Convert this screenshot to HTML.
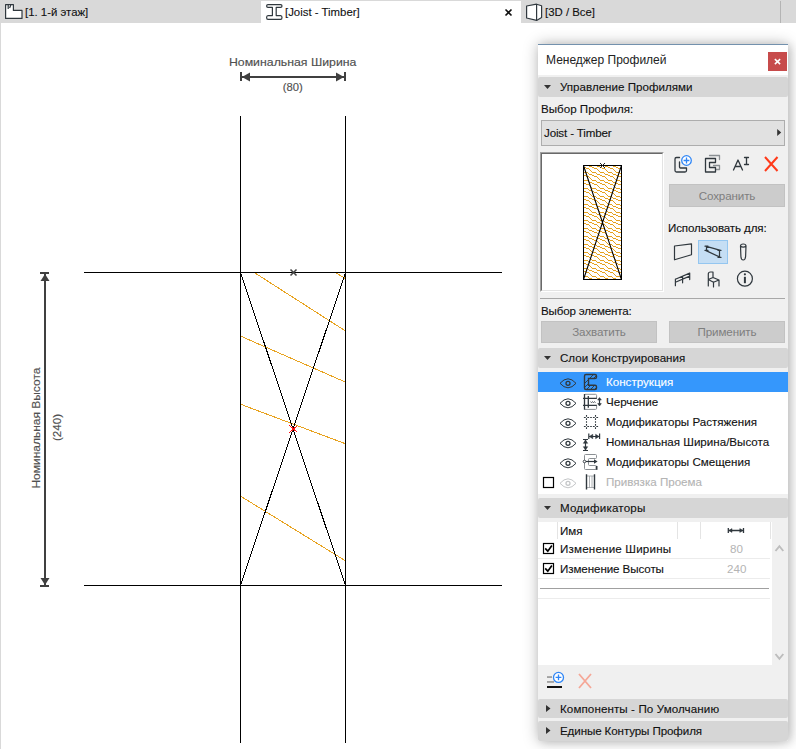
<!DOCTYPE html>
<html><head><meta charset="utf-8">
<style>
*{margin:0;padding:0;box-sizing:border-box}
html,body{width:796px;height:749px;overflow:hidden;background:#fff;font-family:"Liberation Sans",sans-serif;position:relative}
.a{position:absolute}
.t{position:absolute;white-space:nowrap;font-size:11.6px;color:#111;line-height:14px;-webkit-text-stroke:0.12px currentColor}
.hdr{position:absolute;left:538px;width:250px;height:20px;background:#d6d6d6;border-radius:2px}
.btn{position:absolute;background:#cccccc;border:1px solid #c2c2c2;color:#7e7e7e;font-size:11.6px;text-align:center;line-height:20px;letter-spacing:-0.12px}
svg{position:absolute;left:0;top:0}
</style></head><body>
<!-- drawing -->
<svg width="796" height="749" viewBox="0 0 796 749">
<g stroke="#000" stroke-width="1" fill="none" shape-rendering="crispEdges">
<line x1="240.5" y1="116" x2="240.5" y2="743"/>
<line x1="345.5" y1="116" x2="345.5" y2="743"/>
<line x1="84" y1="272.5" x2="502" y2="272.5"/>
<line x1="84" y1="585.5" x2="502" y2="585.5"/>
</g>
<g stroke="#e8a31f" stroke-width="1" fill="none" shape-rendering="crispEdges">
<line x1="255" y1="273" x2="345" y2="330.7"/>
<line x1="336" y1="273" x2="345" y2="278.3"/>
<line x1="241" y1="336.3" x2="345" y2="381.9"/>
<line x1="241" y1="404.4" x2="345" y2="443.6"/>
<line x1="241" y1="496.4" x2="345" y2="560.5"/>
</g>
<g stroke="#000" stroke-width="1" fill="none" shape-rendering="crispEdges">
<line x1="240.5" y1="272.5" x2="345.5" y2="585.5"/>
<line x1="345.5" y1="272.5" x2="240.5" y2="585.5"/>
</g>
<g stroke="#444" stroke-width="1.6"><line x1="290.5" y1="269.5" x2="296.5" y2="275.5"/><line x1="296.5" y1="269.5" x2="290.5" y2="275.5"/></g>

<g stroke="#ff1010" stroke-width="1" shape-rendering="crispEdges"><line x1="289.5" y1="425.5" x2="297.5" y2="432.5"/><line x1="297.5" y1="425.5" x2="289.5" y2="432.5"/></g>
<g fill="#404040" stroke="none">
<rect x="240" y="72" width="2" height="9"/><rect x="344" y="72" width="2" height="9"/>
<rect x="242" y="76" width="102" height="2"/>
<polygon points="242,77 250,72.5 250,81.5"/><polygon points="344,77 336,72.5 336,81.5"/>
<rect x="40" y="272" width="9" height="2"/><rect x="40" y="585" width="9" height="2"/>
<rect x="44" y="274" width="2" height="311"/>
<polygon points="45,274 40.5,281 49.5,281"/><polygon points="45,585 40.5,578 49.5,578"/>
</g>
<g font-family="Liberation Sans" font-size="11" fill="#505050" stroke="#505050" stroke-width="0.15" text-anchor="middle">
<text x="292.7" y="66.4" textLength="127.5" lengthAdjust="spacingAndGlyphs">Номинальная Ширина</text>
<text x="292.7" y="91" textLength="20" lengthAdjust="spacingAndGlyphs">(80)</text>
<text transform="translate(39.6,428.1) rotate(-90)" textLength="121" lengthAdjust="spacingAndGlyphs">Номинальная Высота</text>
<text transform="translate(61,427.5) rotate(-90)" textLength="27" lengthAdjust="spacingAndGlyphs">(240)</text>
</g>
</svg>

<!-- tab bar -->
<div class="a" style="left:0;top:0;width:1px;height:749px;background:#d9d9d9"></div>
<div class="a" style="left:0;top:0;width:796px;height:23px;background:#d9d9d9"></div>
<div class="a" style="left:261px;top:1px;width:260px;height:22px;background:#fff"></div>
<div class="a" style="left:780px;top:1px;width:1px;height:22px;background:#b4b4b4"></div>
<div class="t m" style="left:25px;top:5px;font-size:11.4px;-webkit-text-stroke:0.1px">[1. 1-й этаж]</div>
<div class="t m" style="left:285px;top:5px;font-size:11.4px;-webkit-text-stroke:0.1px">[Joist - Timber]</div>
<div class="t m" style="left:545px;top:5px;font-size:11.4px;-webkit-text-stroke:0.1px">[3D / Все]</div>
<svg width="796" height="30" viewBox="0 0 796 30">
<g fill="#fff" stroke="#30383e" stroke-width="1.2" stroke-linejoin="round">
<path d="M5.6,4.6 H13.4 V10.4 H22 V18.4 H5.6 Z"/>
<path d="M268,4.6 H280.6 Q282,4.6 282,6 Q282,7.4 280.6,7.4 H276.2 V15.6 H280.6 Q282,15.6 282,17.5 Q282,19.4 280.6,19.4 H268 Q266.6,19.4 266.6,17.5 Q266.6,15.6 268,15.6 H272.4 V7.4 H268 Q266.6,7.4 266.6,6 Q266.6,4.6 268,4.6 Z"/>
<path d="M526.6,6 L536.6,4.2 L541.6,5.8 V17.6 L536.6,20.4 L526.6,18 Z"/>
</g>
<path d="M8.2,5 V9 M10.8,5 L9.6,8" stroke="#30383e" stroke-width="1.2"/>
<path d="M536.6,4.2 V20.4" stroke="#30383e" stroke-width="1.2"/>
<path d="M505.5,9.5 L511.5,15.5 M511.5,9.5 L505.5,15.5" stroke="#111" stroke-width="1.6"/>
</svg>

<!-- panel -->
<div class="a" style="left:538px;top:44px;width:250px;height:697px;background:#f0f0f0;box-shadow:0 0 14px rgba(0,0,0,0.28),3px 1px 8px rgba(0,0,0,0.1)"></div>
<div class="a" style="left:538px;top:44px;width:250px;height:1px;background:#7391ad"></div>
<div class="a" style="left:538px;top:45px;width:250px;height:30px;background:#fff"></div>
<div class="t m" style="left:546px;top:53px;font-size:12px;color:#222;-webkit-text-stroke:0">Менеджер Профилей</div>
<div class="a" style="left:768px;top:52px;width:19px;height:19px;background:#c74b4b"></div>

<div class="hdr" style="top:77px"></div>
<div class="t m" style="left:560px;top:80px">Управление Профилями</div>
<div class="t m" style="left:541px;top:102px">Выбор Профиля:</div>
<div class="a" style="left:541px;top:120px;width:244px;height:26px;background:#e1e1e1;border:1px solid #adadad"></div>
<div class="t m" style="left:544px;top:126px;letter-spacing:-0.15px">Joist - Timber</div>
<div class="a" style="left:540px;top:152px;width:124px;height:140px;background:#fff;border:1px solid #a0a0a0;border-right-color:#fff;border-bottom-color:#fff"><div style="width:122px;height:138px;border:1px solid #696969;border-right-color:#e3e3e3;border-bottom-color:#e3e3e3"></div></div>
<div class="btn m" style="left:669px;top:184px;width:116px;height:23px;line-height:22px">Сохранить</div>
<div class="t m" style="left:668px;top:221px;letter-spacing:-0.14px">Использовать для:</div>
<div class="a" style="left:698px;top:240px;width:30px;height:24px;background:#c5def4;border:1px solid #94c6f0"></div>
<div class="a" style="left:540px;top:298px;width:245px;height:1px;background:#a8a8a8"></div>
<div class="t m" style="left:541px;top:304px;letter-spacing:-0.19px">Выбор элемента:</div>
<div class="btn m" style="left:541px;top:321px;width:116px;height:22px">Захватить</div>
<div class="btn m" style="left:669px;top:321px;width:116px;height:22px">Применить</div>

<div class="hdr" style="top:348px"></div>
<div class="t m" style="left:560px;top:351px">Слои Конструирования</div>
<div class="a" style="left:538px;top:372px;width:250px;height:122px;background:#fff"></div>
<div class="a" style="left:538px;top:372px;width:250px;height:20px;background:#3597fc"></div>
<div class="t m" style="left:606px;top:375px;color:#fff">Конструкция</div>
<div class="t m" style="left:606px;top:395px">Черчение</div>
<div class="t m" style="left:606px;top:415px">Модификаторы Растяжения</div>
<div class="t m" style="left:606px;top:435px">Номинальная Ширина/Высота</div>
<div class="t m" style="left:606px;top:455px">Модификаторы Смещения</div>
<div class="t m" style="left:606px;top:475px;color:#b4b4b4">Привязка Проема</div>

<div class="hdr" style="top:498px"></div>
<div class="t m" style="left:560px;top:501px;letter-spacing:0.19px">Модификаторы</div>
<div class="a" style="left:538px;top:522px;width:234px;height:143px;background:#fff"></div>
<div class="a" style="left:557px;top:522px;width:1px;height:17px;background:#e4e4e4"></div>
<div class="a" style="left:677px;top:522px;width:1px;height:17px;background:#e4e4e4"></div>
<div class="a" style="left:700px;top:522px;width:1px;height:17px;background:#e4e4e4"></div>
<div class="a" style="left:770px;top:522px;width:1px;height:17px;background:#e4e4e4"></div>
<div class="a" style="left:538px;top:558px;width:232px;height:1px;background:#ececec"></div>
<div class="a" style="left:538px;top:578px;width:232px;height:1px;background:#ececec"></div>
<div class="a" style="left:540px;top:588px;width:229px;height:1px;background:#a0a0a0"></div>
<div class="a" style="left:538px;top:598px;width:232px;height:1px;background:#ececec"></div>
<div class="t m" style="left:560px;top:524px">Имя</div>
<div class="t m" style="left:560px;top:542px;letter-spacing:0.19px">Изменение Ширины</div>
<div class="t m" style="left:560px;top:562px;letter-spacing:-0.09px">Изменение Высоты</div>
<div class="t m" style="left:730px;top:542px;color:#b4b4b4;-webkit-text-stroke:0">80</div>
<div class="t m" style="left:727px;top:562px;color:#b4b4b4;-webkit-text-stroke:0">240</div>

<div class="hdr" style="top:699px;height:19px"></div>
<div class="t m" style="left:560px;top:702px;letter-spacing:0.1px">Компоненты - По Умолчанию</div>
<div class="hdr" style="top:721px"></div>
<div class="t m" style="left:560px;top:724px;letter-spacing:-0.11px">Единые Контуры Профиля</div>

<!-- panel icons -->
<svg width="796" height="749" viewBox="0 0 796 749">
<defs>
<pattern id="wood" width="8" height="8" patternUnits="userSpaceOnUse" x="0" y="0"><g fill="#e6a11d" shape-rendering="crispEdges"><rect x="2" y="0" width="3" height="1"/><rect x="5" y="1" width="1" height="1"/><rect x="6" y="2" width="1" height="1"/><rect x="7" y="3" width="1" height="1"/><rect x="0" y="4" width="4" height="1"/><rect x="4" y="5" width="1" height="1"/><rect x="5" y="6" width="3" height="1"/><rect x="0" y="7" width="2" height="1"/></g></pattern>
</defs>
<!-- close x -->
<path d="M775.4,59.6 L779.6,63.6 M779.6,59.6 L775.4,63.6" stroke="#fff" stroke-width="1.5" stroke-linecap="square"/>
<!-- header triangles -->
<g fill="#333">
<polygon points="544,85 551,85 547.5,89"/>
<polygon points="544,356 551,356 547.5,360"/>
<polygon points="544,506 551,506 547.5,510"/>
<polygon points="546,705 550.5,708.5 546,712"/>
<polygon points="546,727 550.5,730.5 546,734"/>
<polygon points="777.2,129 781.2,132.5 777.2,136"/>
</g>

<!-- top icon row -->
<g fill="none" stroke="#30383e" stroke-width="1.3" stroke-linejoin="round" stroke-linecap="round">
<path d="M679.5,157.5 H676.5 Q675,157.5 675,159 V170.5 Q675,172 676.5,172 H685 Q686.5,172 686.5,170.5 V168 H680.5 Q679.5,168 679.5,167 V162"/>
<path d="M709.5,155.5 H719.5 V159.5 M713.5,165.5 H719.5 V169.5 H715.5" stroke="#8a8f93"/>
<path d="M705.5,158.5 H715.5 V162.5 H709.5 V167.5 H715.5 V172 H705.5 Z" fill="#f0f0f0"/>
<path d="M733.5,170 L738,160 L742.5,170 M735,166.5 H741"/>
<path d="M744.5,157.5 H748.5 M746.5,157.5 V164.5 M744.5,164.5 H748.5"/>
</g>
<circle cx="686.5" cy="160.5" r="4.8" fill="#fff" stroke="#2f86f6" stroke-width="1.3"/>
<path d="M686.5,157.6 V163.4 M683.6,160.5 H689.4" stroke="#2f86f6" stroke-width="1.3"/>
<path d="M765,157 L777.5,171 M777.5,157 L765,171" stroke="#ff3a1a" stroke-width="2"/>
<!-- use-for icons -->
<g fill="none" stroke="#30383e" stroke-width="1.2" stroke-linejoin="round" stroke-linecap="round">
<path d="M674.5,246 L691.5,243.8 V254.7 L674.5,259.8 Z"/>
<path d="M705.5,246.2 L720.5,250.4 M705.5,250.4 L720.5,257.4 M706.5,246.2 V250.4 M719.5,250.4 V257.4 M705,246.2 H708 M705,250.4 H708 M718,250.4 H721 M718,257.4 H721"/>
<path d="M740.5,246 Q740.5,244 743.2,244 Q746,244 746,246 L745.6,256.5 Q745.3,260 743.2,260 Q741.1,260 740.9,256.5 Z M740.5,246.3 Q743.2,248 746,246.3"/>
<path d="M675.4,279.2 L689.7,273.1 M675.4,282.2 L689.7,276.1 M675.4,279.2 V285.7 M682.6,276.3 V282.8 M689.7,273.1 V279.6"/>
<path d="M708.3,286 V274 Q708.3,272 710.5,272 H713 V277.5 L719,280 V286 M708.3,279.5 L713,277.5 M708.3,279.5 L713.5,282.2 L719,280 M713.5,282.2 V287"/>
<circle cx="744.9" cy="278.7" r="7.5"/>
</g>
<path d="M744.9,276.8 V283.2" stroke="#30383e" stroke-width="2"/>
<circle cx="744.9" cy="274.3" r="1.1" fill="#30383e"/>

<!-- eyes -->
<path d="M560,383.3 Q564,378.8 568,378.8 Q572,378.8 576,383.3 Q572,387.8 568,387.8 Q564,387.8 560,383.3 Z" fill="none" stroke="#30383e" stroke-width="1"/><circle cx="568" cy="383.3" r="2" fill="none" stroke="#30383e" stroke-width="1.3"/>
<path d="M560,403.3 Q564,398.8 568,398.8 Q572,398.8 576,403.3 Q572,407.8 568,407.8 Q564,407.8 560,403.3 Z" fill="none" stroke="#30383e" stroke-width="1"/><circle cx="568" cy="403.3" r="2" fill="none" stroke="#30383e" stroke-width="1.3"/>
<path d="M560,423.3 Q564,418.8 568,418.8 Q572,418.8 576,423.3 Q572,427.8 568,427.8 Q564,427.8 560,423.3 Z" fill="none" stroke="#30383e" stroke-width="1"/><circle cx="568" cy="423.3" r="2" fill="none" stroke="#30383e" stroke-width="1.3"/>
<path d="M560,443.3 Q564,438.8 568,438.8 Q572,438.8 576,443.3 Q572,447.8 568,447.8 Q564,447.8 560,443.3 Z" fill="none" stroke="#30383e" stroke-width="1"/><circle cx="568" cy="443.3" r="2" fill="none" stroke="#30383e" stroke-width="1.3"/>
<path d="M560,463.3 Q564,458.8 568,458.8 Q572,458.8 576,463.3 Q572,467.8 568,467.8 Q564,467.8 560,463.3 Z" fill="none" stroke="#30383e" stroke-width="1"/><circle cx="568" cy="463.3" r="2" fill="none" stroke="#30383e" stroke-width="1.3"/>
<path d="M560,483.3 Q564,478.8 568,478.8 Q572,478.8 576,483.3 Q572,487.8 568,487.8 Q564,487.8 560,483.3 Z" fill="none" stroke="#c4c6c8" stroke-width="1"/><circle cx="568" cy="483.3" r="2" fill="none" stroke="#c4c6c8" stroke-width="1.3"/>
<!-- checkbox empty -->
<rect x="543.5" y="477.5" width="10" height="10" fill="#fff" stroke="#000" stroke-width="1.2"/>
<!-- C section selected -->
<defs><pattern id="hatch" width="4" height="4" patternUnits="userSpaceOnUse" patternTransform="rotate(45)"><line x1="0" y1="0" x2="0" y2="4" stroke="#30383e" stroke-width="0.8"/></pattern></defs>
<clipPath id="cclip"><path d="M586,374.5 H595 Q596.5,374.5 596.5,376 V377 Q596.5,378.5 595,378.5 H588.5 V385.2 H595 Q596.5,385.2 596.5,386.7 V388 Q596.5,389.5 595,389.5 H586 Q584.5,389.5 584.5,388 V376 Q584.5,374.5 586,374.5 Z"/></clipPath>
<path d="M576,392 L594,374 M580,392 L598,374 M584,392 L602,374 M588,392 L606,374 M592,392 L610,374 M596,392 L614,374 M600,392 L618,374" stroke="#30383e" stroke-width="0.9" clip-path="url(#cclip)"/>
<path d="M586,374.5 H595 Q596.5,374.5 596.5,376 V377 Q596.5,378.5 595,378.5 H588.5 V385.2 H595 Q596.5,385.2 596.5,386.7 V388 Q596.5,389.5 595,389.5 H586 Q584.5,389.5 584.5,388 V376 Q584.5,374.5 586,374.5 Z" fill="none" stroke="#30383e" stroke-width="1.4"/>
<!-- drawing icon -->
<g fill="none" stroke-linecap="butt">
<path d="M585,394.3 H595.5 Q596.6,394.3 596.6,395.5 V398.4 M596.6,405.3 V408.3 Q596.6,409.4 595.5,409.4 H585" stroke="#8a8f93" stroke-width="1"/>
<path d="M584.5,394 V409.8 M583,398.4 H596.8 M583,405.3 H596.8 M588.3,396 V407.7" stroke="#30383e" stroke-width="1.3"/>
<path d="M590.5,401.5 L591.5,402.8 L592.5,401.5 L593.5,402.8 L594.5,401.5 L595.5,402.8" stroke="#30383e" stroke-width="0.7"/>
<path d="M599.5,398.5 V405" stroke="#30383e" stroke-width="1.2"/>
<path d="M597.7,400 L599.5,397.6 L601.3,400 Z M597.7,403.6 L599.5,406 L601.3,403.6 Z" fill="#30383e" stroke="#30383e" stroke-width="0.6"/>
</g>
<!-- stretch modifier icon -->
<g stroke="#30383e" stroke-width="1.1" fill="none">
<path d="M583.9,417.5 H585.7 M587.3,417.5 H589.1 M586.5,414.9 V416.7 M586.5,418.3 V420.1 M592.9,417.5 H594.7 M596.3,417.5 H598.1 M595.5,414.9 V416.7 M595.5,418.3 V420.1 M583.9,426.5 H585.7 M587.3,426.5 H589.1 M586.5,423.9 V425.7 M586.5,427.3 V429.1 M592.9,426.5 H594.7 M596.3,426.5 H598.1 M595.5,423.9 V425.7 M595.5,427.3 V429.1"/>
<path d="M590.2,417.5 H591.8 M590.2,426.5 H591.8 M586.5,421.2 V422.8 M595.5,421.2 V422.8"/>
</g>
<!-- nominal dims icon -->
<g stroke="#30383e" fill="#30383e">
<path d="M588.8,433.5 V439 M599.6,433.5 V439 M589,436.5 H599.4" stroke-width="1.2" fill="none"/>
<path d="M589.3,436.5 L592.8,434.3 V438.7 Z M599.1,436.5 L595.6,434.3 V438.7 Z" stroke-width="0.5"/>
<path d="M583,439.5 H588 M583,450.5 H588 M585.5,439.8 V450.2" stroke-width="1.2" fill="none"/>
<path d="M585.5,440 L583.3,443.3 H587.7 Z M585.5,450 L583.3,446.7 H587.7 Z" stroke-width="0.5"/>
</g>
<!-- offset modifier icon -->
<g fill="none">
<path d="M584.5,455.5 Q584.5,454.5 585.5,454.5 H595.5 Q596.5,454.5 596.5,455.5 V457.5 Q596.5,458.5 595.5,458.5 H589.5 Q588.5,458.5 588.5,459.5 V464.5 Q588.5,465.5 589.5,465.5 H595.5 Q596.5,465.5 596.5,466.5 V468.5 Q596.5,469.5 595.5,469.5 H585.5 Q584.5,469.5 584.5,468.5 Z" stroke="#8a8f93" stroke-width="1"/>
<path d="M585.8,461.5 H595" stroke="#30383e" stroke-width="1.2"/><polygon points="594,459.3 597.6,461.5 594,463.7" fill="#30383e"/>
<circle cx="584.5" cy="461.5" r="1.3" fill="#fff" stroke="#30383e" stroke-width="0.9"/>
<path d="M596.6,466 V469.8" stroke="#30383e" stroke-width="1.8"/>
</g>
<!-- opening icon -->
<g fill="none">
<path d="M589.5,476 V488 M592,476 V488 M587,476 H594 M587,487.5 H594" stroke="#9a9ea2" stroke-width="0.8"/>
<path d="M586.5,474.3 V489.6 M594.5,474.3 V489.6" stroke="#30383e" stroke-width="1.4"/>
</g>
<!-- checkboxes checked -->
<rect x="543.5" y="543.5" width="10" height="10" fill="#fff" stroke="#000" stroke-width="1.2"/>
<rect x="543.5" y="563.5" width="10" height="10" fill="#fff" stroke="#000" stroke-width="1.2"/>
<path d="M545.2,548.4 L547.8,551.2 L551.9,545.6 M545.2,568.4 L547.8,571.2 L551.9,565.6" fill="none" stroke="#000" stroke-width="1.7"/>
<!-- table header dim icon -->
<g stroke="#30383e" fill="#30383e">
<path d="M728.3,528 V533 M743.5,528 V533 M728.5,530.5 H743.3" stroke-width="1.3" fill="none"/>
<path d="M729,530.5 L732,528.6 V532.4 Z M742.8,530.5 L739.8,528.6 V532.4 Z" stroke-width="0.5"/>
</g>
<!-- scroll chevrons -->
<path d="M775.5,551 L779.4,546.2 L783.3,551 M775.5,654 L779.4,658.8 L783.3,654" fill="none" stroke="#bdbdbd" stroke-width="1.9"/>
<!-- bottom icons -->
<g>
<rect x="547" y="676.3" width="5" height="1.5" fill="#8f8f8f"/>
<rect x="547" y="681.2" width="7" height="1.5" fill="#8f8f8f"/>
<rect x="547" y="686" width="15" height="2" fill="#111"/>
<circle cx="558.5" cy="677.4" r="5" fill="#fff" stroke="#2f86f6" stroke-width="1.3"/>
<path d="M558.5,674.5 V680.3 M555.6,677.4 H561.4" stroke="#2f86f6" stroke-width="1.3"/>
<path d="M579,674 L591,688 M591,674 L579,688" stroke="#f5a797" stroke-width="1.8"/>
</g>
<!-- preview profile -->
<rect x="583.5" y="165.5" width="38" height="114" fill="url(#wood)" stroke="#000" stroke-width="1"/>
<path d="M583.5,165.5 L621.5,279.5 M621.5,165.5 L583.5,279.5" stroke="#000" stroke-width="1.1"/>
<path d="M600,163 L605,168 M605,163 L600,168" stroke="#222" stroke-width="1"/>
</svg>
</body></html>
